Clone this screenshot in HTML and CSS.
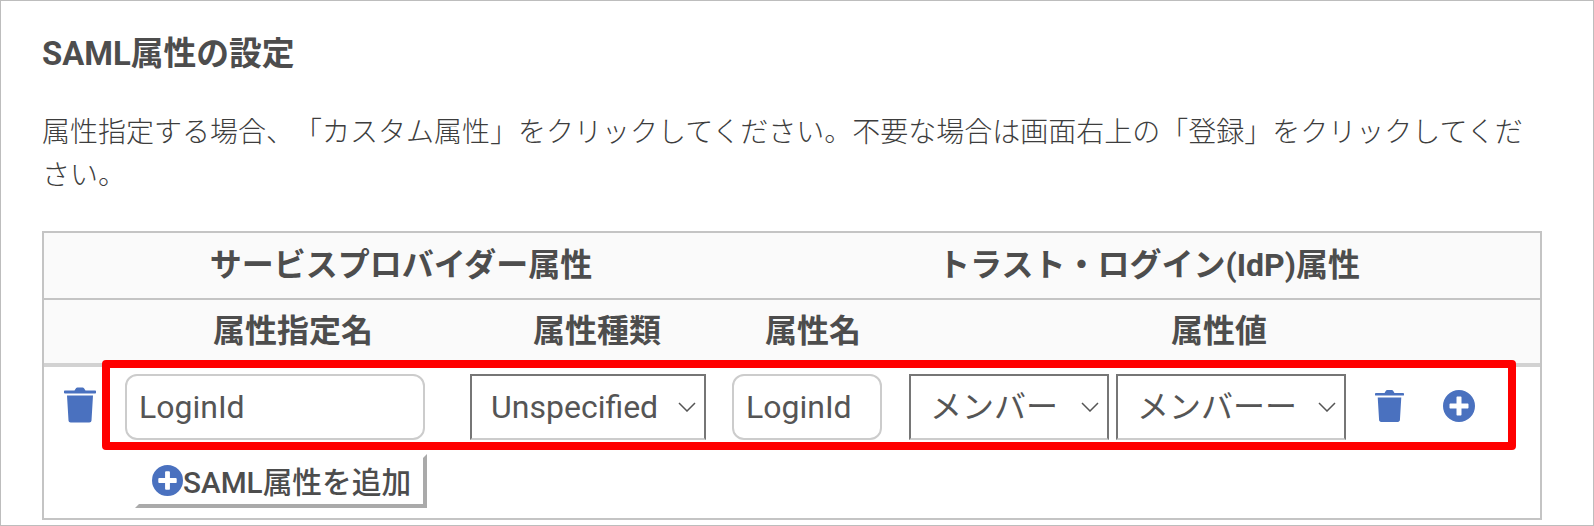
FILE: index.html
```html
<!DOCTYPE html>
<html lang="ja">
<head>
<meta charset="utf-8">
<title>SAML属性の設定</title>
<link rel="stylesheet" href="styles.css">
</head>
<body>
<div class="panel">
	<h2 class="panel_title">SAML属性の設定</h2>
	<p class="panel_note">属性指定する場合、「カスタム属性」をクリックしてください。不要な場合は画面右上の「登録」をクリックしてください。</p>

	<div class="attrs">
		<div class="head_row head_group">
			<div>サービスプロバイダー属性</div>
			<div>トラスト・ログイン(IdP)属性</div>
		</div>
		<div class="head_row head_cols">
			<div>属性指定名</div>
			<div>属性種類</div>
			<div>属性名</div>
			<div>属性値</div>
		</div>

		<div class="attr_row">
			<button type="button" class="icon_btn trash_first" aria-label="削除">
				<svg width="32" height="36" viewBox="0 1.400 32 35.100"><path d="M1 4.500h9.500L12 2.200c.3-.5.8-.8 1.400-.8h5.200c.6 0 1.100.3 1.400.8l1.500 2.300H31c.6 0 1 .4 1 1v1.200c0 .4-.4.8-1 .8H1c-.6 0-1-.4-1-.8V5.500c0-.6.4-1 1-1zM3 9.500h26l-1.500 25c-.1 1.200-1 2-2.200 2H6.700c-1.200 0-2.100-.8-2.200-2z"/></svg>
			</button>
			<input class="text_in name_in" type="text" value="LoginId">
			<select class="pick kind_pick"><option>Unspecified</option></select>
			<input class="text_in attr_in" type="text" value="LoginId">
			<select class="pick member_pick"><option>メンバー</option></select>
			<select class="pick value_pick"><option>メンバーー</option></select>
			<button type="button" class="icon_btn trash_last" aria-label="削除">
				<svg width="29" height="32" viewBox="0 1.400 32 35.100"><path d="M1 4.500h9.500L12 2.200c.3-.5.8-.8 1.400-.8h5.200c.6 0 1.100.3 1.400.8l1.500 2.300H31c.6 0 1 .4 1 1v1.200c0 .4-.4.8-1 .8H1c-.6 0-1-.4-1-.8V5.500c0-.6.4-1 1-1zM3 9.500h26l-1.500 25c-.1 1.200-1 2-2.200 2H6.700c-1.200 0-2.100-.8-2.200-2z"/></svg>
			</button>
			<button type="button" class="icon_btn plus_last" aria-label="追加">
				<svg width="32" height="32" viewBox="0 0 32 32"><path fill-rule="evenodd" d="M16 0a16 16 0 1 1 0 32a16 16 0 0 1 0-32zM13.500 7.500v6h-6c-.6 0-1 .4-1 1v3c0 .6.4 1 1 1h6v6c0 .6.4 1 1 1h3c.6 0 1-.4 1-1v-6h6c.6 0 1-.4 1-1v-3c0-.6-.4-1-1-1h-6v-6c0-.6-.4-1-1-1h-3c-.6 0-1 .4-1 1z"/></svg>
			</button>
		</div>

		<div class="add_row">
			<button type="button" class="add_btn">
				<svg width="31" height="31" viewBox="0 0 32 32"><path fill-rule="evenodd" d="M16 0a16 16 0 1 1 0 32a16 16 0 0 1 0-32zM13.500 7.500v6h-6c-.6 0-1 .4-1 1v3c0 .6.4 1 1 1h6v6c0 .6.4 1 1 1h3c.6 0 1-.4 1-1v-6h6c.6 0 1-.4 1-1v-3c0-.6-.4-1-1-1h-6v-6c0-.6-.4-1-1-1h-3c-.6 0-1 .4-1 1z"/></svg>SAML属性を追加
			</button>
		</div>

		<!-- red annotation box over the row -->
		<div class="mark_box"></div>
	</div>
</div>
</body>
</html>
```

FILE: styles.css
```css
* { box-sizing: border-box; }

html, body { height: 100%; }

body {
    margin: 0;
    background: #fff;
    color: #4d4d4d;
    font-family: Roboto, "Noto Sans CJK JP", sans-serif;
    overflow: hidden;
    text-spacing-trim: space-all;
}

.panel {
    height: 526px;
    border: 1px solid #bdbdbd;
    padding: 33px 52px 0 41px;
}

.panel_title {
    margin: 0;
    font-size: 32.800px;
    line-height: 40px;
    font-weight: 700;
}

.panel_note {
    margin: 37px 0 0;
    color: #3d3d3d;
    font-size: 28px;
    font-weight: 300;
    line-height: 43px;
}

.attrs {
    position: relative;
    margin-top: 34px;
    width: 1500px;
    height: 289px;
    border: 2px solid #c4c4c4;
}

.head_row {
    display: grid;
    background: #fafafa;
    font-size: 32px;
    font-weight: 700;
    text-align: center;
    line-height: 40px;
}

.head_group {
    grid-template-columns: 714px 1fr;
    height: 67px;
    padding-top: 12px;
    border-bottom: 2px solid #c4c4c4;
}

.head_cols {
    grid-template-columns: 358px 250px 182px 630px;
    height: 67px;
    padding: 11px 0 0 70px;
    border-bottom: 4px solid #d2d2d2;
}

.attr_row {
    display: flex;
    align-items: center;
    height: 80px;
    padding-left: 20px;
}

.text_in, .pick {
    height: 66px;
    font-family: inherit;
    font-size: 32px;
    color: #555;
    background-color: #fff;
}

.text_in {
    border: 2px solid #ccc;
    border-radius: 12px;
    padding: 0 12px;
}

.pick {
    appearance: none;
    border: 2px solid #767676;
    border-bottom-color: #ccc;
    border-radius: 0;
    padding: 0 30px 0 19px;
    background-image: url("data:image/svg+xml,%3Csvg xmlns='http://www.w3.org/2000/svg' width='18' height='10'%3E%3Cpath d='M1 1l8 8l8-8' fill='none' stroke='%23555' stroke-width='1.500'/%3E%3C/svg%3E");
    background-repeat: no-repeat;
    background-position: right 8px center;
}

.name_in { width: 300px; margin-left: 29px; }
.kind_pick { width: 236px; margin-left: 45px; }
.attr_in { width: 150px; margin-left: 26px; }
.member_pick { width: 200px; margin-left: 27px; }
.value_pick { width: 230px; margin-left: 7px; }

.icon_btn {
    display: flex;
    padding: 0;
    border: 0;
    background: none;
}

.icon_btn svg, .add_btn svg { fill: #4a71bf; }

.trash_first { margin-bottom: 5px; }
.trash_last { margin: 0 0 2px 29px; }
.plus_last { margin: 0 0 2px 39px; }

.add_row { padding: 7px 0 0 91px; }

.add_btn {
    display: flex;
    align-items: center;
    width: 292px;
    height: 54px;
    padding: 0 0 2px 13px;
    border: 4px solid transparent;
    border-right-color: #aaa;
    border-bottom-color: #aaa;
    background: #fff;
    color: #4d4d4d;
    font-family: inherit;
    font-size: 29.700px;
    font-weight: 500;
    white-space: nowrap;
}

.mark_box {
    position: absolute;
    left: 58px;
    top: 127px;
    width: 1414px;
    height: 90px;
    border: 8px solid #f00;
    border-radius: 4px;
}
```
